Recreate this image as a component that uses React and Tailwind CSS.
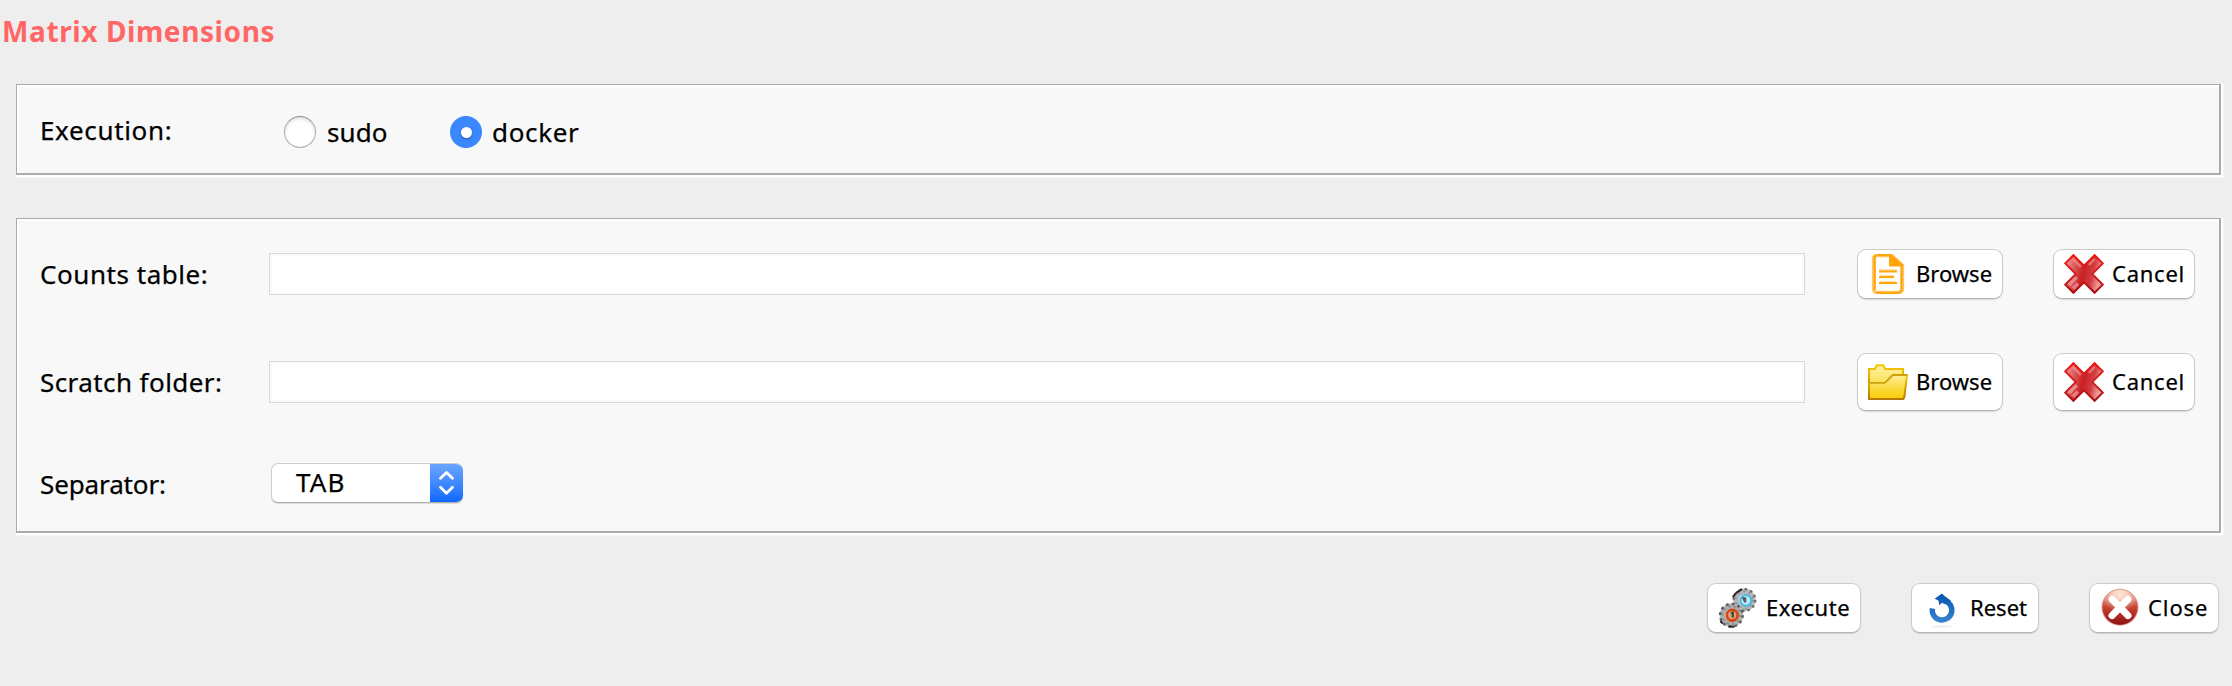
import React from "react";

function FileIcon() {
  return (
    <svg className="h-10 w-10 shrink-0" viewBox="0 0 20 20">
      <path d="M4.2 .8H12L17.2 5.6V17.8A1.4 1.4 0 0 1 15.8 19.2H4.2A1.4 1.4 0 0 1 2.8 17.8V2.2A1.4 1.4 0 0 1 4.2 .8Z" fill="#fff" stroke="#ffc45c" strokeWidth="1.7" />
      <path d="M4.6 .5H12M16.7 6V17.6A1.2 1.2 0 0 1 15.5 18.9M15.7 19.5H4.3M3.4 18V2.2A1.4 1.4 0 0 1 4.4 .6" fill="none" stroke="#ffa50a" strokeWidth="1" />
      <path d="M10.5 1H12.4L17.5 5.4V6.2H10.5Z" fill="#ffa50a" />
      <path d="M5.5 8.1H14.5M6 14H14M6 11H13" stroke="#ffe2ad" strokeWidth="1.2" />
      <path d="M5.5 8.8H14.5M5.5 11.5H13M5.5 14.5H14.5" stroke="#ffa50a" strokeWidth="1" />
    </svg>
  );
}

function FolderIcon() {
  return (
    <svg className="h-10 w-10 shrink-0" viewBox="0 0 20 20">
      <defs>
        <linearGradient id="folderBack" x1="0" y1="0" x2="0" y2="1">
          <stop offset="0" stopColor="#fff3a0" />
          <stop offset="1" stopColor="#f5d01c" />
        </linearGradient>
        <linearGradient id="folderFront" x1="0" y1="0" x2="0" y2="1">
          <stop offset="0" stopColor="#fff09a" />
          <stop offset=".5" stopColor="#fbdc45" />
          <stop offset="1" stopColor="#f8cd06" />
        </linearGradient>
        <linearGradient id="folderEdge" x1="0" y1="0" x2="0" y2="1">
          <stop offset="0" stopColor="#f5c905" />
          <stop offset=".45" stopColor="#d9a404" />
          <stop offset="1" stopColor="#b57a06" />
        </linearGradient>
      </defs>
      <path d="M.5 3.5H3.4L4.4 1.6H7.6L8.6 3.5H17.5V18.5H.5Z" fill="url(#folderBack)" stroke="url(#folderEdge)" />
      <path d="M.5 10.6H8.6L12.6 6.5H19.5L18.2 17.4Q18 18.5 17 18.5H.5Z" fill="url(#folderFront)" />
      <path d="M.5 18.5V10.6M19.5 6.5L18.2 17.4Q18 18.5 17 18.5H.5" fill="none" stroke="url(#folderEdge)" />
      <path d="M1 10.4H8.4L12.4 6.5H19.8" fill="none" stroke="#cda00c" strokeWidth=".9" />
    </svg>
  );
}

function CrossIcon() {
  return (
    <svg className="h-10 w-10 shrink-0" viewBox="0 0 20 20">
      <defs>
        <linearGradient id="crossFill" x1="0" y1="0" x2="1" y2=".25">
          <stop offset="0" stopColor="#f6a3a3" />
          <stop offset=".3" stopColor="#dd5a5a" />
          <stop offset=".55" stopColor="#c92024" />
          <stop offset=".8" stopColor="#d43c3e" />
          <stop offset="1" stopColor="#ee9a9a" />
        </linearGradient>
        <linearGradient id="crossEdge" x1="0" y1="0" x2="0" y2="1">
          <stop offset="0" stopColor="#ee1410" />
          <stop offset=".5" stopColor="#cf2222" />
          <stop offset="1" stopColor="#a80e12" />
        </linearGradient>
      </defs>
      <path d="M4.7 .6L10 5.9L15.3 .6L19.4 4.7L14.1 10L19.4 15.3L15.3 19.4L10 14.1L4.7 19.4L.6 15.3L5.9 10L.6 4.7Z" fill="url(#crossFill)" stroke="url(#crossEdge)" strokeWidth="1" />
      <path d="M4.4 2.4L8.4 6.4M15.4 2.4L12.4 5.4" fill="none" stroke="#f49a98" strokeWidth="1.3" opacity=".6" />
      <path d="M2.6 15.4L6.4 11.6M4.6 17.2L7 14.8" fill="none" stroke="#fbc4c4" strokeWidth="1.8" opacity=".5" />
    </svg>
  );
}

function GearsIcon() {
  return (
    <svg className="h-10 w-10 shrink-0" viewBox="0 0 20 20">
      <g fill="none">
        <circle cx="13.2" cy="6" r="5.1" stroke="#bdbdbd" strokeWidth="1.2" />
        <circle cx="13.2" cy="6" r="5.3" stroke="#66696d" strokeWidth="1.4" strokeDasharray="1.2 1.57" />
        <circle cx="13.2" cy="6" r="3.9" fill="#e8edf0" stroke="#b4b6b8" strokeWidth="2" />
        <circle cx="13.2" cy="6" r="4.3" stroke="#8d9093" strokeWidth=".9" strokeDasharray=".9 1.9" />
        <circle cx="13.9" cy="6.2" r="2.7" fill="#bfeaf9" stroke="#4fb9e4" strokeWidth="1.1" />
        <path d="M9 2.4L12 .6M7.4 4.6L8.8 2.8" stroke="#202225" strokeWidth="1" />
        <path d="M12.4 4.6L13.6 7M13.6 4.6V7.2" stroke="#565c62" strokeWidth="1.1" />
        <circle cx="6.7" cy="13.6" r="5.3" stroke="#b8b8b8" strokeWidth="1.2" />
        <circle cx="6.7" cy="13.6" r="5.5" stroke="#5c5c5e" strokeWidth="1.5" strokeDasharray="1.3 1.58" />
        <circle cx="6.7" cy="13.6" r="4.1" fill="#eee" stroke="#adadad" strokeWidth="2" />
        <circle cx="6.7" cy="13.6" r="4.5" stroke="#858585" strokeWidth=".9" strokeDasharray=".9 1.9" />
        <circle cx="7.1" cy="13.6" r="2.7" fill="#dba078" stroke="#d4480c" strokeWidth="1.3" />
        <path d="M6.4 12.5L7.4 12.3V14.8" stroke="#4a4442" strokeWidth="1.1" />
        <path d="M5.2 19.3L8.2 19.4M1.2 16.5L2.4 17.8" stroke="#242424" strokeWidth="1" />
      </g>
    </svg>
  );
}

function ResetIcon() {
  return (
    <svg className="h-10 w-10 shrink-0" viewBox="0 0 20 20">
      <defs>
        <linearGradient id="resetBlue" gradientUnits="userSpaceOnUse" x1="0" y1="3" x2="0" y2="17">
          <stop offset="0" stopColor="#0457ae" />
          <stop offset="1" stopColor="#3784d0" />
        </linearGradient>
      </defs>
      <path d="M5.2 10.2A4.9 4.9 0 1 0 11 6.3" fill="none" stroke="url(#resetBlue)" strokeWidth="2.7" />
      <path d="M6.3 5.4L10 2.7L11 3.8L14.5 6.4L12 8.2L10 7.4L8.7 8.6L8.2 6.3Z" fill="url(#resetBlue)" />
      <ellipse cx="10" cy="19.3" rx="5.5" ry=".5" fill="#ececec" />
    </svg>
  );
}

function CloseIcon() {
  return (
    <svg className="h-10 w-10 shrink-0" viewBox="0 0 20 20">
      <defs>
        <linearGradient id="closeRed" x1="0" y1="0" x2="0" y2="1">
          <stop offset="0" stopColor="#f3b9a4" />
          <stop offset=".3" stopColor="#dd8470" />
          <stop offset=".5" stopColor="#c6402f" />
          <stop offset="1" stopColor="#8f0f14" />
        </linearGradient>
        <radialGradient id="closeGlow" cx=".5" cy=".15" r=".5">
          <stop offset="0" stopColor="#ffe9dc" />
          <stop offset="1" stopColor="#ffe9dc" stopOpacity="0" />
        </radialGradient>
      </defs>
      <circle cx="10" cy="9.6" r="9" fill="url(#closeRed)" stroke="#d98d83" strokeWidth=".4" />
      <circle cx="10" cy="9.6" r="8.6" fill="url(#closeGlow)" />
      <path d="M6.1 5.6L14 13.8M13.9 5.6L6 13.8" stroke="#fff" strokeWidth="3.5" strokeLinecap="round" />
    </svg>
  );
}

function Button({ icon, className, textClass, children }) {
  return (
    <button className={"flex shrink-0 items-center rounded-[9px] border border-[#cbcbcb] border-b-[#b4b4b4] bg-white pl-2.5 text-[22px] leading-none shadow-[0_1px_1px_rgba(0,0,0,0.13)] " + className}>
      {icon}
      <span className={"pb-0.5 whitespace-nowrap " + textClass}>{children}</span>
    </button>
  );
}

function Panel({ className, children }) {
  return (
    <section className="ml-4 w-[2208px] border-r border-b border-[#f4f4f4] bg-white pr-0.5 pb-0.5">
      <div className="border-t border-l border-r-2 border-b-2 border-[#ababab] bg-white pt-0.5 pl-0.5">
        <div className={"bg-[#f8f8f8] pl-[21px] " + className}>{children}</div>
      </div>
    </section>
  );
}

function FieldRow({ label, labelClass, icon, buttonClass }) {
  return (
    <div className="flex items-center">
      <label className={"w-[229px] shrink-0 whitespace-nowrap " + labelClass}>{label}</label>
      <input className="h-[42px] w-[1536px] shrink-0 border border-[#d9d9d9] bg-white shadow-[inset_0_0_0_2px_#fafafa] outline-none" />
      <Button icon={icon} className={"ml-[52px] w-[146px] " + buttonClass} textClass="ml-2">Browse</Button>
      <Button icon={<CrossIcon />} className={"ml-[50px] w-[142px] " + buttonClass} textClass="ml-2 tracking-[0.75px]">Cancel</Button>
    </div>
  );
}

export default function App() {
  return (
    <main className="h-[686px] w-[2232px] overflow-hidden bg-[#eeeeee] font-['Noto_Sans',sans-serif] text-[26px] leading-10 text-black [-webkit-text-stroke:0.25px]">
      <h1 className="h-[84px] pt-[11px] pl-0.5 text-[28px] font-bold tracking-[0.6px] text-[#ff6666] [-webkit-text-stroke:0px]">Matrix Dimensions</h1>

      <Panel className="flex h-[86px]">
        <span className="mt-[23px] w-[244px] tracking-[0.65px]">Execution:</span>
        <label className="mt-[25px] flex h-10 w-[166px] items-center">
          <span className="mr-[11px] h-8 w-8 rounded-full border border-[#adadad] border-t-[#8e8e8e] bg-white shadow-[inset_0_2px_3px_rgba(0,0,0,0.13)]" />
          <span className="tracking-[0.1px]">sudo</span>
        </label>
        <label className="mt-[25px] flex h-10 items-center">
          <span className="mr-2.5 flex h-8 w-8 items-center justify-center rounded-full bg-[#3b87fd]">
            <span className="h-[11px] w-[11px] rounded-full bg-white shadow-[0_1px_2px_rgba(0,0,0,0.35)]" />
          </span>
          <span className="tracking-[0.65px]">docker</span>
        </label>
      </Panel>

      <div className="mt-10">
        <Panel className="h-[310px] pt-7">
          <FieldRow label="Counts table:" labelClass="tracking-[0.55px]" icon={<FileIcon />} buttonClass="h-[50px]" />
          <div className="mt-[54px]">
            <FieldRow label="Scratch folder:" labelClass="tracking-[0.42px]" icon={<FolderIcon />} buttonClass="h-[58px]" />
          </div>
          <div className="mt-[52px] flex">
            <label className="mt-px w-[231px] tracking-[-0.12px]">Separator:</label>
            <div className="flex h-10 w-48 justify-between overflow-hidden rounded-[7px] border border-r-0 border-[#cdcdcd] border-b-[#b0b0b0] bg-white shadow-[0_1px_1px_rgba(0,0,0,0.12)]">
              <span className="-mt-0.5 ml-[24px] tracking-[1.1px]">TAB</span>
              <span className="-mt-px h-10 w-[33px] bg-linear-to-b from-[#6ba6fc] to-[#0567ff]">
                <svg className="h-10 w-[33px]" viewBox="0 0 33 40" fill="none" stroke="#fff" strokeWidth="2.8" strokeLinecap="round" strokeLinejoin="round">
                  <path d="M10.5 15.3L16.5 9.5L22.5 15.3M10.5 24.3L16.5 30.3L22.5 24.3" />
                </svg>
              </span>
            </div>
          </div>
        </Panel>
      </div>

      <footer className="mt-[47px] flex justify-end gap-[50px] pr-[13px]">
        <Button icon={<GearsIcon />} className="h-[50px] w-[154px]" textClass="ml-2 tracking-[0.55px]">Execute</Button>
        <Button icon={<ResetIcon />} className="h-[50px] w-[128px]" textClass="ml-2">Reset</Button>
        <Button icon={<CloseIcon />} className="h-[50px] w-[130px]" textClass="ml-2 tracking-[0.9px]">Close</Button>
      </footer>
    </main>
  );
}
